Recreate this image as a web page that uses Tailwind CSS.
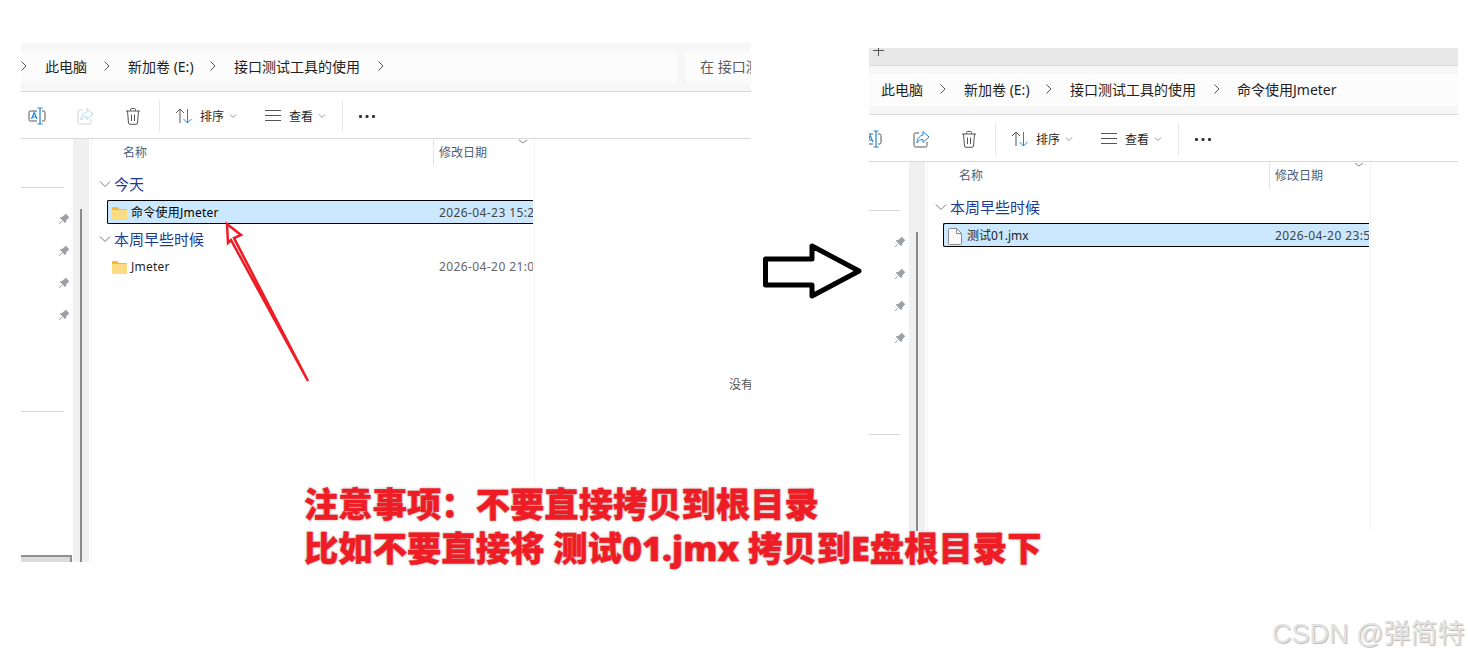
<!DOCTYPE html>
<html lang="zh-CN">
<head>
  <meta charset="UTF-8" />
  <title>注意事项</title>
  <script src="https://cdn.jsdelivr.net/npm/@tailwindcss/browser@4"></script>
</head>
<body class="bg-white font-['Noto_Sans','Noto_Sans_CJK_SC',sans-serif]">

<div class="relative w-[1468px] h-[659px] overflow-hidden bg-white">

  <!-- Left explorer window -->
  <div class="absolute left-[21px] top-[43px] w-[730px] h-[519px] overflow-hidden flex flex-col">
    <!-- Address bar -->
    <div class="h-[49px] shrink-0 flex items-center bg-[#f7f7f7] border-b border-[#d9d9d9]">
      <div class="w-[656px] h-[32px] shrink-0 rounded-[4px] bg-[#fcfcfc] flex items-center pb-[2px] text-[14px] text-[#1f1f1f] whitespace-nowrap">
        <svg class="w-2 h-3 -ml-px shrink-0" viewBox="0 0 8 12" fill="none" stroke="#555" stroke-width="1"><path d="M1.5 1.5 6 6l-4.500 4.500"/></svg>
        <span class="ml-[17px] w-[42px]">此电脑</span>
        <svg class="w-2 h-3 ml-[16px] shrink-0" viewBox="0 0 8 12" fill="none" stroke="#555" stroke-width="1"><path d="M1.5 1.5 6 6l-4.500 4.500"/></svg>
        <span class="ml-[17px] w-[64px]">新加卷 (E:)</span>
        <svg class="w-2 h-3 ml-[17px] shrink-0" viewBox="0 0 8 12" fill="none" stroke="#555" stroke-width="1"><path d="M1.5 1.5 6 6l-4.500 4.500"/></svg>
        <span class="ml-[17px] w-[126px]">接口测试工具的使用</span>
        <svg class="w-2 h-3 ml-[17px] shrink-0" viewBox="0 0 8 12" fill="none" stroke="#555" stroke-width="1"><path d="M1.5 1.5 6 6l-4.500 4.500"/></svg>
      </div>
      <div class="ml-[8px] w-[80px] h-[32px] shrink-0 rounded-[4px] bg-[#fcfcfc] flex items-center pl-[15px] pb-[2px] text-[14px] text-[#5c5c5c] whitespace-nowrap">在 接口测</div>
    </div>

    <!-- Toolbar -->
    <div class="h-[47px] shrink-0 flex items-center pt-[2px] bg-white border-b border-[#d9d9d9] text-[12px] text-[#1f1f1f]">
      <svg class="w-5 h-5 ml-[6px] shrink-0" viewBox="0 0 20 20" fill="none"><path d="M10 5H3.500A1.500 1.500 0 0 0 2 6.500v7A1.500 1.500 0 0 0 3.500 15H10M15 5h1.500A1.500 1.500 0 0 1 18 6.500v7a1.500 1.500 0 0 1-1.500 1.500H15" stroke="#555"/><path d="M10.500 2h5M10.500 18h5M13 2v16" stroke="#1b86d9" stroke-width="1.200"/><path d="M4.500 13 7.200 6.500 10 13M5.500 11h3.500" stroke="#1b86d9" stroke-width="1.200"/></svg>
      <svg class="w-5 h-5 ml-[28px] shrink-0" viewBox="0 0 20 20" fill="none"><path d="M8 4H4.500A1.500 1.500 0 0 0 3 5.500v11A1.500 1.500 0 0 0 4.500 18h10a1.500 1.500 0 0 0 1.500-1.500V13" stroke="#d4d4d4"/><path d="M12 2.500 18 8l-6 5.500V10.500c-3 0-4.500 1-6 3.500 0-4 2-7 6-8z" stroke="#b6d9f3"/></svg>
      <svg class="w-5 h-5 ml-[28px] shrink-0" viewBox="0 0 20 20" fill="none" stroke="#555"><path d="M3 5h14M7.500 5V3.500a1 1 0 0 1 1-1h3a1 1 0 0 1 1 1V5M4.500 5l1 12a1.500 1.500 0 0 0 1.500 1.300h6a1.500 1.500 0 0 0 1.500-1.300l1-12M8.500 8.500v6.500M11.500 8.500v6.500"/></svg>
      <div class="ml-[16px] w-px h-[32px] bg-[#e8e8e8] shrink-0"></div>
      <svg class="w-5 h-5 ml-[14px] shrink-0" viewBox="0 0 20 20" fill="none"><path d="M6 17V3M2 7l4-4 4 4" stroke="#555"/><path d="M13.500 3v14M9.500 13l4 4 4-4" stroke="#1b86d9"/></svg>
      <span class="ml-[6px] mt-[2px] w-[24px] shrink-0">排序</span>
      <svg class="w-2 h-2 ml-[5px] shrink-0" viewBox="0 0 8 8" fill="none" stroke="#999"><path d="M1 2.500 4 5.500 7 2.500"/></svg>
      <svg class="w-5 h-5 ml-[26px] shrink-0" viewBox="0 0 20 20" fill="none" stroke="#555"><path d="M2 4.500h16M2 9.500h16M2 14.500h16"/></svg>
      <span class="ml-[6px] mt-[2px] w-[24px] shrink-0">查看</span>
      <svg class="w-2 h-2 ml-[5px] shrink-0" viewBox="0 0 8 8" fill="none" stroke="#999"><path d="M1 2.500 4 5.500 7 2.500"/></svg>
      <div class="ml-[16px] w-px h-[32px] bg-[#e8e8e8] shrink-0"></div>
      <svg class="w-4 h-4 ml-[16px] shrink-0" viewBox="0 0 16 16" fill="#333"><rect x="0" y="7" width="3" height="3" rx="1"/><rect x="6.500" y="7" width="3" height="3" rx="1"/><rect x="13" y="7" width="3" height="3" rx="1"/></svg>
    </div>

    <!-- Body -->
    <div class="flex-1 min-h-0 flex">
      <!-- Navigation pane -->
      <div class="w-[52px] shrink-0 flex flex-col">
        <div class="mt-[48px] h-px w-[43px] bg-[#d5d5d5]"></div>
        <div class="mt-[25px] ml-[37px] flex flex-col gap-[20px]">
          <svg class="w-3 h-3" viewBox="0 0 12 12" fill="#9aa0a6"><path d="M7.500 .5 11.500 4.500 10.300 5 8 8 8 9.500 7 10 2 5 2.500 4 4 4 7 1.700z"/><path d="M4.300 7.700 1 11" stroke="#9aa0a6"/></svg>
          <svg class="w-3 h-3" viewBox="0 0 12 12" fill="#9aa0a6"><path d="M7.500 .5 11.500 4.500 10.300 5 8 8 8 9.500 7 10 2 5 2.500 4 4 4 7 1.700z"/><path d="M4.300 7.700 1 11" stroke="#9aa0a6"/></svg>
          <svg class="w-3 h-3" viewBox="0 0 12 12" fill="#9aa0a6"><path d="M7.500 .5 11.500 4.500 10.300 5 8 8 8 9.500 7 10 2 5 2.500 4 4 4 7 1.700z"/><path d="M4.300 7.700 1 11" stroke="#9aa0a6"/></svg>
          <svg class="w-3 h-3" viewBox="0 0 12 12" fill="#9aa0a6"><path d="M7.500 .5 11.500 4.500 10.300 5 8 8 8 9.500 7 10 2 5 2.500 4 4 4 7 1.700z"/><path d="M4.300 7.700 1 11" stroke="#9aa0a6"/></svg>
        </div>
        <div class="mt-[90px] h-px w-[43px] bg-[#d5d5d5]"></div>
        <div class="mt-auto h-[7px] w-[51px] bg-[#dcdcdc] border-t-2 border-r-2 border-[#8f8f8f]"></div>
      </div>
      <!-- Scroll strip -->
      <div class="w-[16px] shrink-0 bg-[#f0f0f0] pl-[7px] pt-[70px]">
        <div class="w-[2px] h-full bg-[#8a8a8a]"></div>
      </div>
      <!-- File list -->
      <div class="ml-[2px] w-[444px] shrink-0 border-x border-[#f4f4f4] flex flex-col">
        <div class="h-[27px] shrink-0 relative flex items-center text-[12px] text-[#4c607a]">
          <span class="ml-[31px] w-[310px]">名称</span>
          <div class="w-px h-[27px] bg-[#e5e5e5]"></div>
          <span class="ml-[5px]">修改日期</span>
          <svg class="absolute left-[425px] top-[-1px] w-3 h-2" viewBox="0 0 12 8" fill="none" stroke="#888"><path d="M2 2 6 5 10 2"/></svg>
        </div>
        <div class="mt-[6px] h-[24px] shrink-0 flex items-center text-[15px] text-[#1c3a96]">
          <svg class="ml-[7px] w-3 h-3 shrink-0" viewBox="0 0 12 12" fill="none" stroke="#777"><path d="M1 3.500 6 8.500 11 3.500"/></svg>
          <span class="ml-[3px]">今天</span>
        </div>
        <div class="mt-[4px] ml-[15px] mr-px h-[24px] shrink-0 flex items-center pt-[2px] overflow-hidden whitespace-nowrap bg-[#cce8ff] border-y border-l border-black rounded-l-[2px] text-[12px] text-black">
          <svg class="ml-[4px] w-[15px] h-[13px] shrink-0" viewBox="0 0 15 13"><path d="M0 1a1 1 0 0 1 1-1h4l2 2h7a1 1 0 0 1 1 1v2H0z" fill="#f8b92e"/><path d="M0 3h15v9a1 1 0 0 1-1 1H1a1 1 0 0 1-1-1z" fill="#fcdc82"/></svg>
          <span class="ml-[4px] w-[308px] shrink-0 tracking-[0.25px]">命令使用Jmeter</span>
          <span class="text-[#444] tracking-[0.4px]">2026-04-23 15:28</span>
        </div>
        <div class="mt-[3px] h-[24px] shrink-0 flex items-center text-[15px] text-[#1c3a96]">
          <svg class="ml-[7px] w-3 h-3 shrink-0" viewBox="0 0 12 12" fill="none" stroke="#777"><path d="M1 3.500 6 8.500 11 3.500"/></svg>
          <span class="ml-[3px]">本周早些时候</span>
        </div>
        <div class="mt-[4px] ml-[15px] mr-px h-[24px] shrink-0 flex items-center overflow-hidden whitespace-nowrap border-y border-l border-transparent text-[12px] text-[#1f1f1f]">
          <svg class="ml-[4px] w-[15px] h-[13px] shrink-0" viewBox="0 0 15 13"><path d="M0 1a1 1 0 0 1 1-1h4l2 2h7a1 1 0 0 1 1 1v2H0z" fill="#f8b92e"/><path d="M0 3h15v9a1 1 0 0 1-1 1H1a1 1 0 0 1-1-1z" fill="#fcdc82"/></svg>
          <span class="ml-[4px] w-[308px] shrink-0 tracking-[0.25px]">Jmeter</span>
          <span class="text-[#666] tracking-[0.4px]">2026-04-20 21:05</span>
        </div>
      </div>
      <!-- Preview pane -->
      <div class="flex-1 min-w-0 pl-[194px] pt-[237px] text-[12px] text-[#555] whitespace-nowrap">没有</div>
    </div>
  </div>

  <!-- Right explorer window -->
  <div class="absolute left-[869px] top-[48px] w-[589px] h-[483px] overflow-hidden flex flex-col">
    <!-- Tab strip -->
    <div class="h-[18px] shrink-0 bg-[#e8e8e8] border-b border-[#d9d9d9] overflow-hidden">
      <svg class="ml-[4px] -mt-[3px] w-[11px] h-[11px]" viewBox="0 0 11 11" fill="none" stroke="#555"><path d="M5.500 0v11M0 5.500h11"/></svg>
    </div>
    <!-- Address bar -->
    <div class="h-[49px] shrink-0 flex items-center bg-[#f7f7f7] border-b border-[#d9d9d9]">
      <div class="w-full h-[32px] rounded-[4px] bg-[#fcfcfc] flex items-center pb-[2px] text-[14px] text-[#1f1f1f] whitespace-nowrap">
        <span class="ml-[12px] w-[42px] shrink-0">此电脑</span>
        <svg class="w-2 h-3 ml-[16px] shrink-0" viewBox="0 0 8 12" fill="none" stroke="#555" stroke-width="1"><path d="M1.5 1.5 6 6l-4.500 4.500"/></svg>
        <span class="ml-[17px] w-[64px] shrink-0">新加卷 (E:)</span>
        <svg class="w-2 h-3 ml-[17px] shrink-0" viewBox="0 0 8 12" fill="none" stroke="#555" stroke-width="1"><path d="M1.5 1.5 6 6l-4.500 4.500"/></svg>
        <span class="ml-[17px] w-[126px] shrink-0">接口测试工具的使用</span>
        <svg class="w-2 h-3 ml-[17px] shrink-0" viewBox="0 0 8 12" fill="none" stroke="#555" stroke-width="1"><path d="M1.5 1.5 6 6l-4.500 4.500"/></svg>
        <span class="ml-[16px] shrink-0">命令使用Jmeter</span>
      </div>
    </div>

    <!-- Toolbar -->
    <div class="h-[47px] shrink-0 flex items-center pt-[2px] bg-white border-b border-[#d9d9d9] text-[12px] text-[#1f1f1f]">
      <svg class="w-5 h-5 -ml-[6px] shrink-0" viewBox="0 0 20 20" fill="none"><path d="M10 5H3.500A1.500 1.500 0 0 0 2 6.500v7A1.500 1.500 0 0 0 3.500 15H10M15 5h1.500A1.500 1.500 0 0 1 18 6.500v7a1.500 1.500 0 0 1-1.500 1.500H15" stroke="#555"/><path d="M10.500 2h5M10.500 18h5M13 2v16" stroke="#1b86d9" stroke-width="1.200"/><path d="M4.500 13 7.200 6.500 10 13M5.500 11h3.500" stroke="#1b86d9" stroke-width="1.200"/></svg>
      <svg class="w-5 h-5 ml-[28px] shrink-0" viewBox="0 0 20 20" fill="none"><path d="M8 4H4.500A1.500 1.500 0 0 0 3 5.500v11A1.500 1.500 0 0 0 4.500 18h10a1.500 1.500 0 0 0 1.500-1.500V13" stroke="#555"/><path d="M12 2.500 18 8l-6 5.500V10.500c-3 0-4.500 1-6 3.500 0-4 2-7 6-8z" stroke="#1b86d9"/></svg>
      <svg class="w-5 h-5 ml-[28px] shrink-0" viewBox="0 0 20 20" fill="none" stroke="#555"><path d="M3 5h14M7.500 5V3.500a1 1 0 0 1 1-1h3a1 1 0 0 1 1 1V5M4.500 5l1 12a1.500 1.500 0 0 0 1.500 1.300h6a1.500 1.500 0 0 0 1.500-1.300l1-12M8.500 8.500v6.500M11.500 8.500v6.500"/></svg>
      <div class="ml-[16px] w-px h-[32px] bg-[#e8e8e8] shrink-0"></div>
      <svg class="w-5 h-5 ml-[14px] shrink-0" viewBox="0 0 20 20" fill="none"><path d="M6 17V3M2 7l4-4 4 4" stroke="#555"/><path d="M13.500 3v14M9.500 13l4 4 4-4" stroke="#1b86d9"/></svg>
      <span class="ml-[6px] mt-[2px] w-[24px] shrink-0">排序</span>
      <svg class="w-2 h-2 ml-[5px] shrink-0" viewBox="0 0 8 8" fill="none" stroke="#999"><path d="M1 2.500 4 5.500 7 2.500"/></svg>
      <svg class="w-5 h-5 ml-[26px] shrink-0" viewBox="0 0 20 20" fill="none" stroke="#555"><path d="M2 4.500h16M2 9.500h16M2 14.500h16"/></svg>
      <span class="ml-[6px] mt-[2px] w-[24px] shrink-0">查看</span>
      <svg class="w-2 h-2 ml-[5px] shrink-0" viewBox="0 0 8 8" fill="none" stroke="#999"><path d="M1 2.500 4 5.500 7 2.500"/></svg>
      <div class="ml-[16px] w-px h-[32px] bg-[#e8e8e8] shrink-0"></div>
      <svg class="w-4 h-4 ml-[16px] shrink-0" viewBox="0 0 16 16" fill="#333"><rect x="0" y="7" width="3" height="3" rx="1"/><rect x="6.500" y="7" width="3" height="3" rx="1"/><rect x="13" y="7" width="3" height="3" rx="1"/></svg>
    </div>

    <!-- Body -->
    <div class="flex-1 min-h-0 flex">
      <div class="w-[40px] shrink-0 flex flex-col">
        <div class="mt-[48px] h-px w-[31px] bg-[#d5d5d5]"></div>
        <div class="mt-[25px] ml-[25px] flex flex-col gap-[20px]">
          <svg class="w-3 h-3" viewBox="0 0 12 12" fill="#9aa0a6"><path d="M7.500 .5 11.500 4.500 10.300 5 8 8 8 9.500 7 10 2 5 2.500 4 4 4 7 1.700z"/><path d="M4.300 7.700 1 11" stroke="#9aa0a6"/></svg>
          <svg class="w-3 h-3" viewBox="0 0 12 12" fill="#9aa0a6"><path d="M7.500 .5 11.500 4.500 10.300 5 8 8 8 9.500 7 10 2 5 2.500 4 4 4 7 1.700z"/><path d="M4.300 7.700 1 11" stroke="#9aa0a6"/></svg>
          <svg class="w-3 h-3" viewBox="0 0 12 12" fill="#9aa0a6"><path d="M7.500 .5 11.500 4.500 10.300 5 8 8 8 9.500 7 10 2 5 2.500 4 4 4 7 1.700z"/><path d="M4.300 7.700 1 11" stroke="#9aa0a6"/></svg>
          <svg class="w-3 h-3" viewBox="0 0 12 12" fill="#9aa0a6"><path d="M7.500 .5 11.500 4.500 10.300 5 8 8 8 9.500 7 10 2 5 2.500 4 4 4 7 1.700z"/><path d="M4.300 7.700 1 11" stroke="#9aa0a6"/></svg>
        </div>
        <div class="mt-[90px] h-px w-[31px] bg-[#d5d5d5]"></div>
      </div>
      <div class="w-[16px] shrink-0 bg-[#f0f0f0] pl-[7px] pt-[70px]">
        <div class="w-[2px] h-full bg-[#8a8a8a]"></div>
      </div>
      <div class="ml-[2px] w-[444px] shrink-0 border-x border-[#f4f4f4] flex flex-col">
        <div class="h-[27px] shrink-0 relative flex items-center text-[12px] text-[#4c607a]">
          <span class="ml-[31px] w-[310px]">名称</span>
          <div class="w-px h-[27px] bg-[#e5e5e5]"></div>
          <span class="ml-[5px]">修改日期</span>
          <svg class="absolute left-[425px] top-[-1px] w-3 h-2" viewBox="0 0 12 8" fill="none" stroke="#888"><path d="M2 2 6 5 10 2"/></svg>
        </div>
        <div class="mt-[6px] h-[24px] shrink-0 flex items-center text-[15px] text-[#1c3a96]">
          <svg class="ml-[7px] w-3 h-3 shrink-0" viewBox="0 0 12 12" fill="none" stroke="#777"><path d="M1 3.500 6 8.500 11 3.500"/></svg>
          <span class="ml-[3px]">本周早些时候</span>
        </div>
        <div class="mt-[4px] ml-[15px] mr-px h-[24px] shrink-0 flex items-center pt-[2px] overflow-hidden whitespace-nowrap bg-[#cce8ff] border-y border-l border-black rounded-l-[2px] text-[12px] text-black">
          <svg class="ml-[4px] w-[14px] h-[17px] shrink-0" viewBox="0 0 14 17" fill="#fafafa" stroke="#8a8a8a"><path d="M1.500 .5h7l5 5v10a1 1 0 0 1-1 1h-11a1 1 0 0 1-1-1v-14a1 1 0 0 1 1-1z"/><path d="M8.500 .5v5h5" fill="none"/></svg>
          <span class="ml-[5px] w-[308px] shrink-0 text-[#222]">测试01.jmx</span>
          <span class="text-[#444] tracking-[0.4px]">2026-04-20 23:55</span>
        </div>
      </div>
    </div>
  </div>

  <!-- Annotation arrows -->
  <svg class="absolute inset-0 w-[1468px] h-[659px]" viewBox="0 0 1468 659" fill="none">
    <path d="M227 224 241 235 234 238 308 381 231 240 228 243Z" stroke="#ee1c25" stroke-width="2.500"/>
    <path d="M765.500 259H812V246L859 271 812 296V285H765.500Z" fill="#fff" stroke="#000" stroke-width="5" stroke-linejoin="round"/>
  </svg>

  <!-- Red note -->
  <div class="absolute left-[304px] top-[482px] text-[34.35px] leading-[44px] font-black text-[#ee1c25] whitespace-nowrap [-webkit-text-stroke:0.5px_#ee1c25] [text-shadow:0_0_1px_#fff,0_0_3px_#999]">
    <p>注意事项：不要直接拷贝到根目录</p>
    <p>比如不要直接将 测试01.jmx 拷贝到E盘根目录下</p>
  </div>

  <!-- Watermark -->
  <div class="absolute left-[1272px] top-[615px] text-[27px] leading-[38px] text-[#e2e2e2] whitespace-nowrap font-['Liberation_Sans','Noto_Sans_CJK_SC',sans-serif] [text-shadow:1px_1px_1px_#bbb]">CSDN @弹简特</div>
</div>

</body>
</html>
